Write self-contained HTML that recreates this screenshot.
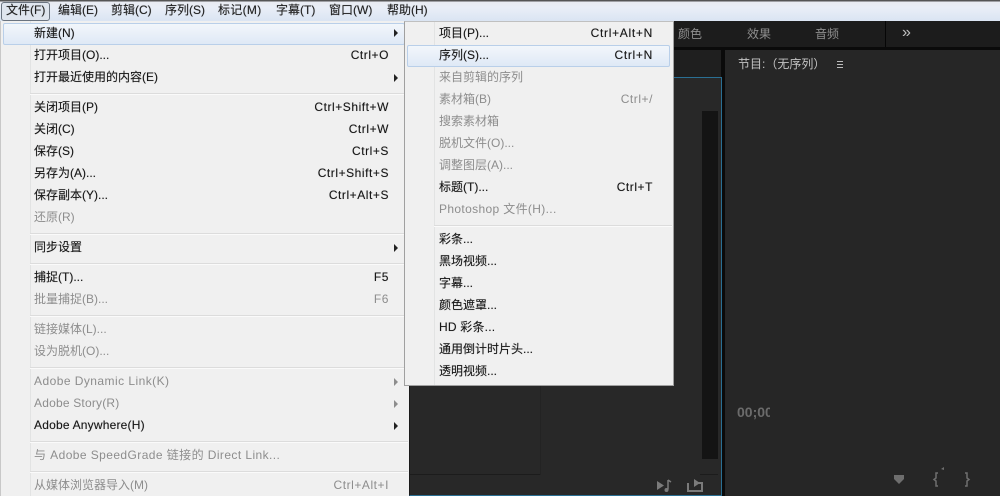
<!DOCTYPE html>
<html><head><meta charset="utf-8">
<style>
*{box-sizing:border-box;margin:0;padding:0}
html,body{width:1000px;height:496px;overflow:hidden;background:#000}
body{position:relative;font-family:"Liberation Sans","Noto Sans CJK SC",sans-serif;font-size:12px;color:#1a1a1a}
.abs{position:absolute}
#top{left:0;top:0;width:1000px;height:21px;background:linear-gradient(#555 0,#555 1px,#e9ecf2 2px,#e9eef7 8px,#dbe5f3 20px)}
.mb{position:absolute;top:3px;height:15px;line-height:15px;font-size:12px;color:#222;white-space:nowrap;text-shadow:0 0 .6px rgba(0,0,0,.5)}
#fbtn{left:1px;top:2px;width:49px;height:19px;border:1px solid #6b7480;border-radius:3px;background:#dfe5ee}
.menu{position:absolute;background:#f0f0f0}
.gut{position:absolute;top:0;bottom:0;width:1px;background:#e2e3e3}
.r{position:absolute;height:22px;line-height:22px;white-space:nowrap;color:#161616;text-shadow:0 0 .6px rgba(0,0,0,.45)}
.d{color:#8d8d8d;text-shadow:none}
.k{position:absolute;height:22px;line-height:22px;text-align:right;white-space:nowrap;color:#161616;letter-spacing:.55px;text-shadow:0 0 .6px rgba(0,0,0,.45)}
.k.d{color:#8d8d8d;text-shadow:none}
.sep{position:absolute;height:2px;background:linear-gradient(#dcdcdc 50%,#fafafa 50%)}
.ar{position:absolute;width:0;height:0;border-left:4px solid #222;border-top:4px solid transparent;border-bottom:4px solid transparent}
.ar.d2{border-left-color:#8d8d8d}
.hl{position:absolute;border:1px solid #b9cfe9;border-radius:2px;background:linear-gradient(#f2f6fb,#dfe9f6)}
.t{position:absolute;color:#8f8f8f;font-size:12px;line-height:16px;white-space:nowrap}
</style></head><body>

<div class="abs" style="left:0;top:21px;width:1000px;height:475px;background:#0a0a0a"></div>
<div class="abs" style="left:673px;top:21px;width:327px;height:26px;background:#1c1c1c"></div>
<div class="abs" style="left:885px;top:21px;width:1px;height:26px;background:#060606"></div>
<div class="t" style="left:678px;top:26px">颜色</div>
<div class="t" style="left:747px;top:26px">效果</div>
<div class="t" style="left:815px;top:26px">音频</div>
<div class="t" style="left:902px;top:25px;color:#c0c0c0;font-size:16px">&raquo;</div>

<div class="abs" style="left:673px;top:50px;width:48px;height:27px;background:#1f1f1f"></div>
<div class="abs" style="left:409px;top:77px;width:313px;height:419px;background:#282828;border:1px solid #2a6f93;border-left-color:#1a1a1a;border-top-color:#2a6f93"></div>
<div class="abs" style="left:702px;top:111px;width:16px;height:348px;background:#141414"></div>
<div class="abs" style="left:410px;top:474px;width:130px;height:1px;background:#1c1c1c"></div>
<div class="abs" style="left:700px;top:474px;width:18px;height:1px;background:#1c1c1c"></div>
<div class="abs" style="left:540px;top:385px;width:1px;height:90px;background:#232323"></div>
<svg class="abs" style="left:655px;top:478px" width="50" height="16" viewBox="0 0 50 16">
<path d="M2 3 L9 7.5 L2 12Z" fill="#7b7b7b"/><path d="M13 2V11.5M13 2L16 4" stroke="#7b7b7b" stroke-width="1.5" fill="none"/><circle cx="11.5" cy="12" r="2" fill="#7b7b7b"/>
<path d="M33 5V13H47V5H43" stroke="#7b7b7b" stroke-width="2" fill="none"/><path d="M39 1L45 5L39 9Z" fill="#7b7b7b"/>
</svg>

<div class="abs" style="left:725px;top:50px;width:275px;height:446px;background:#262626"></div>
<div class="t" style="left:738px;top:56px;color:#c4c4c4">节目:（无序列）</div>
<div class="abs" style="left:837px;top:61px;width:6px;height:7px;border-top:1px solid #bbb;border-bottom:1px solid #bbb"><div style="height:1px;margin-top:2px;background:#bbb"></div></div>
<div class="t" style="left:737px;top:404px;width:33px;overflow:hidden;color:#6f6f6f;font-weight:bold;font-size:14px;opacity:.95">00;00</div>
<svg class="abs" style="left:890px;top:465px" width="90" height="24" viewBox="0 0 90 24">
<path d="M4 10H14V14L9 19L4 14Z" fill="#6e6e6e"/>
<path d="M48 8H46V13L44 14.500L46 16V21H48" stroke="#6e6e6e" stroke-width="1.500" fill="none"/>
<path d="M51 4L54 2V5Z" fill="#6e6e6e"/>
<path d="M75 8H77V13L79 14.500L77 16V21H75" stroke="#6e6e6e" stroke-width="1.500" fill="none"/>
</svg>

<div class="abs" id="top"></div>
<div class="abs" id="fbtn"></div>
<div class="mb" style="left:6px">文件(F)</div>
<div class="mb" style="left:58px">编辑(E)</div>
<div class="mb" style="left:111px">剪辑(C)</div>
<div class="mb" style="left:165px">序列(S)</div>
<div class="mb" style="left:218px;letter-spacing:.3px">标记(M)</div>
<div class="mb" style="left:276px">字幕(T)</div>
<div class="mb" style="left:329px">窗口(W)</div>
<div class="mb" style="left:387px">帮助(H)</div>

<div class="menu" style="left:0;top:21px;width:409px;height:475px;border-left:1px solid #c8c8c8">
<div class="gut" style="left:29px"></div>
</div>
<div class="hl" style="left:3px;top:23px;width:402px;height:22px"></div>

<div class="r" style="left:34px;top:22px">新建(N)</div><div class="ar" style="left:394px;top:29px"></div>
<div class="r" style="left:34px;top:44px">打开项目(O)...</div><div class="k" style="right:611px;top:44px">Ctrl+O</div>
<div class="r" style="left:34px;top:66px">打开最近使用的内容(E)</div><div class="ar" style="left:394px;top:74px"></div>
<div class="sep" style="left:30px;top:93px;width:375px"></div>
<div class="r" style="left:34px;top:96px">关闭项目(P)</div><div class="k" style="right:611px;top:96px">Ctrl+Shift+W</div>
<div class="r" style="left:34px;top:118px">关闭(C)</div><div class="k" style="right:611px;top:118px">Ctrl+W</div>
<div class="r" style="left:34px;top:140px">保存(S)</div><div class="k" style="right:611px;top:140px">Ctrl+S</div>
<div class="r" style="left:34px;top:162px">另存为(A)...</div><div class="k" style="right:611px;top:162px">Ctrl+Shift+S</div>
<div class="r" style="left:34px;top:184px">保存副本(Y)...</div><div class="k" style="right:611px;top:184px">Ctrl+Alt+S</div>
<div class="r d" style="left:34px;top:206px">还原(R)</div>
<div class="sep" style="left:30px;top:233px;width:375px"></div>
<div class="r" style="left:34px;top:236px">同步设置</div><div class="ar" style="left:394px;top:244px"></div>
<div class="sep" style="left:30px;top:263px;width:375px"></div>
<div class="r" style="left:34px;top:266px">捕捉(T)...</div><div class="k" style="right:611px;top:266px">F5</div>
<div class="r d" style="left:34px;top:288px">批量捕捉(B)...</div><div class="k d" style="right:611px;top:288px">F6</div>
<div class="sep" style="left:30px;top:315px;width:375px"></div>
<div class="r d" style="left:34px;top:318px">链接媒体(L)...</div>
<div class="r d" style="left:34px;top:340px">设为脱机(O)...</div>
<div class="sep" style="left:30px;top:367px;width:378px"></div>
<div class="r d" style="left:34px;top:370px;letter-spacing:.45px">Adobe Dynamic Link(K)</div><div class="ar d2" style="left:394px;top:378px"></div>
<div class="r d" style="left:34px;top:392px;letter-spacing:.2px">Adobe Story(R)</div><div class="ar d2" style="left:394px;top:400px"></div>
<div class="r" style="left:34px;top:414px;letter-spacing:.2px">Adobe Anywhere(H)</div><div class="ar" style="left:394px;top:422px"></div>
<div class="sep" style="left:30px;top:441px;width:378px"></div>
<div class="r d" style="left:34px;top:444px;letter-spacing:.42px">与 Adobe SpeedGrade 链接的 Direct Link...</div>
<div class="sep" style="left:30px;top:471px;width:378px"></div>
<div class="r d" style="left:34px;top:474px">从媒体浏览器导入(M)</div><div class="k d" style="right:611px;top:474px">Ctrl+Alt+I</div>

<div class="menu" style="left:404px;top:21px;width:270px;height:365px;border:1px solid #a0a0a0;border-top-color:#c0c0c0">
<div class="gut" style="left:29px"></div>
</div>
<div class="hl" style="left:407px;top:45px;width:263px;height:22px"></div>

<div class="r" style="left:439px;top:22px">项目(P)...</div><div class="k" style="right:347px;top:22px;letter-spacing:.7px">Ctrl+Alt+N</div>
<div class="r" style="left:439px;top:44px">序列(S)...</div><div class="k" style="right:347px;top:44px;letter-spacing:.7px">Ctrl+N</div>
<div class="r d" style="left:439px;top:66px">来自剪辑的序列</div>
<div class="r d" style="left:439px;top:88px">素材箱(B)</div><div class="k d" style="right:347px;top:88px">Ctrl+/</div>
<div class="r d" style="left:439px;top:110px">搜索素材箱</div>
<div class="r d" style="left:439px;top:132px">脱机文件(O)...</div>
<div class="r d" style="left:439px;top:154px">调整图层(A)...</div>
<div class="r" style="left:439px;top:176px">标题(T)...</div><div class="k" style="right:347px;top:176px">Ctrl+T</div>
<div class="r d" style="left:439px;top:198px;letter-spacing:.35px">Photoshop 文件(H)...</div>
<div class="sep" style="left:434px;top:225px;width:238px"></div>
<div class="r" style="left:439px;top:228px">彩条...</div>
<div class="r" style="left:439px;top:250px">黑场视频...</div>
<div class="r" style="left:439px;top:272px">字幕...</div>
<div class="r" style="left:439px;top:294px">颜色遮罩...</div>
<div class="r" style="left:439px;top:316px;letter-spacing:.2px">HD 彩条...</div>
<div class="r" style="left:439px;top:338px">通用倒计时片头...</div>
<div class="r" style="left:439px;top:360px">透明视频...</div>

</body></html>
